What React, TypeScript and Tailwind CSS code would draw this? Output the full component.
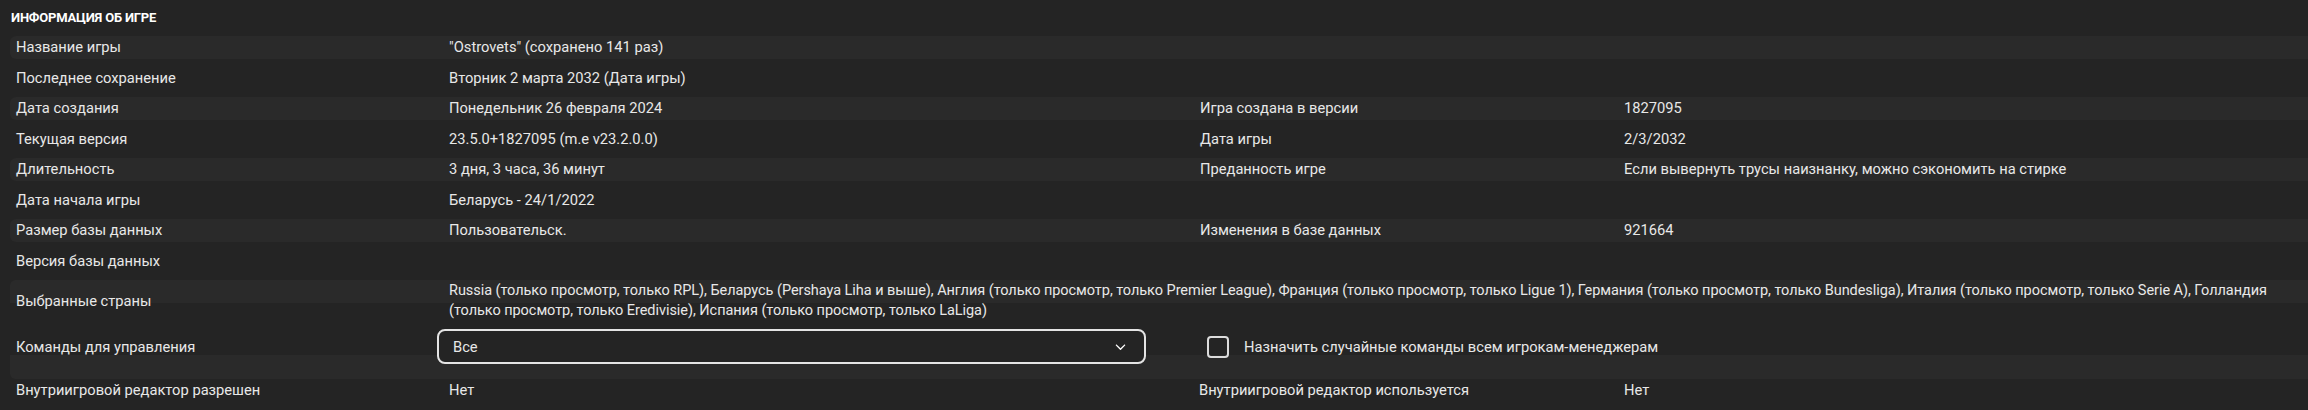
import { FaChevronDown } from 'react-icons/fa6';

type Info = { label: string; value?: string; label2?: string; value2?: string };

const topRows: Info[] = [
  { label: 'Название игры', value: '"Ostrovets" (сохранено 141 раз)' },
  { label: 'Последнее сохранение', value: 'Вторник 2 марта 2032 (Дата игры)' },
  { label: 'Дата создания', value: 'Понедельник 26 февраля 2024', label2: 'Игра создана в версии', value2: '1827095' },
  { label: 'Текущая версия', value: '23.5.0+1827095 (m.e v23.2.0.0)', label2: 'Дата игры', value2: '2/3/2032' },
  { label: 'Длительность', value: '3 дня, 3 часа, 36 минут', label2: 'Преданность игре', value2: 'Если вывернуть трусы наизнанку, можно сэкономить на стирке' },
  { label: 'Дата начала игры', value: 'Беларусь - 24/1/2022' },
  { label: 'Размер базы данных', value: 'Пользовательск.', label2: 'Изменения в базе данных', value2: '921664' },
  { label: 'Версия базы данных' },
];

const countries =
  'Russia (только просмотр, только RPL), Беларусь (Pershaya Liha и выше), Англия (только просмотр, только Premier League), Франция (только просмотр, только Ligue 1), Германия (только просмотр, только Bundesliga), Италия (только просмотр, только Serie A), Голландия (только просмотр, только Eredivisie), Испания (только просмотр, только LaLiga)';

const grid = 'grid grid-cols-[433px_751px_424px_1fr]';

function InfoRow({ row, striped }: { row: Info; striped: boolean }) {
  return (
    <div className={`${grid} h-[23px] items-center rounded-l-[6px] pl-[6px] ${striped ? 'bg-[#2a2a2a]' : ''}`}>
      <span>{row.label}</span>
      <span>{row.value}</span>
      <span>{row.label2}</span>
      <span>{row.value2}</span>
    </div>
  );
}

export default function App() {
  return (
    <div className="h-[410px] w-[2308px] overflow-hidden bg-[#242424] text-[14.7px] text-[#e8e8e8] font-['Roboto','Liberation_Sans',sans-serif]">
      <div className="flex h-[36px] items-center pl-[11px] text-[13px] font-bold uppercase tracking-[-0.2px] text-white">
        Информация об игре
      </div>

      <div className="ml-[10px] flex flex-col gap-[7.5px]">
        {topRows.map((row, i) => (
          <InfoRow key={row.label} row={row} striped={i % 2 === 0} />
        ))}
      </div>

      {/* selected countries, stripe only on the top 23px */}
      <div className={`${grid} mt-[7.5px] ml-[10px] h-[42px] items-center rounded-l-[6px] pl-[6px] bg-[linear-gradient(to_bottom,#2a2a2a_23px,transparent_23px)]`}>
        <span>Выбранные страны</span>
        <span className="col-span-3 text-[14.5px] leading-[20px] tracking-[-0.05px]">{countries}</span>
      </div>

      {/* teams to manage */}
      <div className={`${grid} ml-[10px] h-[57px] items-start rounded-l-[6px] pl-[6px] bg-[linear-gradient(to_top,#2a2a2a_24px,transparent_24px)]`}>
        <span className="mt-[8px] flex h-[35px] items-center">Команды для управления</span>
        <div className="mt-[7px] -ml-[12px] flex h-[35px] w-[709px] items-center justify-between rounded-[8px] border-2 border-[#e4e4e4] bg-[#242424] pl-[14px] pr-[18px]">
          <span className="mt-[1px]">Все</span>
          <FaChevronDown className="h-[11px] w-[11px] text-white" />
        </div>
        <label className="col-span-2 mt-[7px] ml-[7px] flex h-[35px] items-center gap-[15px]">
          <span className="h-[22px] w-[22px] rounded-[4px] border-2 border-[#dcdcdc]" />
          <span className="mt-[1px]">Назначить случайные команды всем игрокам-менеджерам</span>
        </label>
      </div>

      <div className={`${grid} ml-[10px] h-[14px] items-center pl-[6px]`}>
        <span>Внутриигровой редактор разрешен</span>
        <span>Нет</span>
        <span className="-ml-[1px]">Внутриигровой редактор используется</span>
        <span>Нет</span>
      </div>
    </div>
  );
}
